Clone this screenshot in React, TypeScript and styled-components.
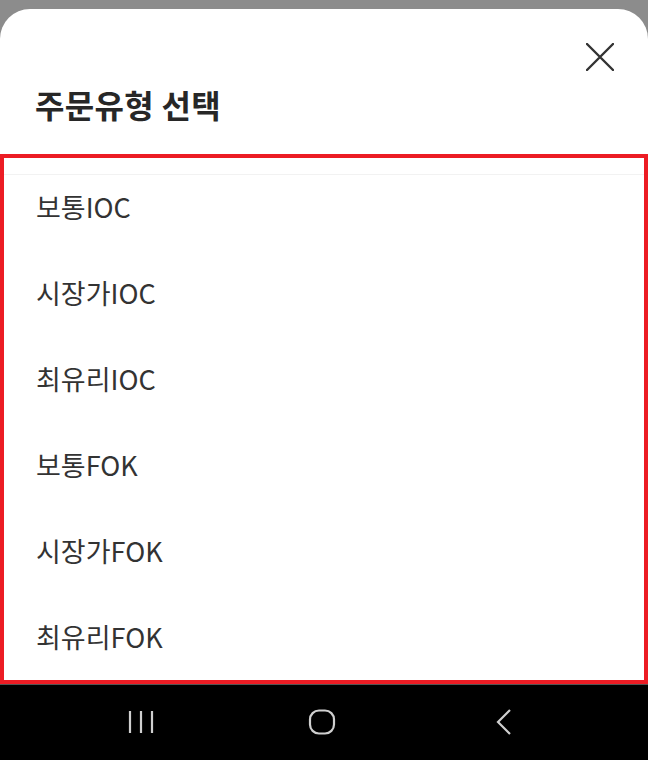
import React from "react";
import styled, { createGlobalStyle } from "styled-components";

const GlobalStyle = createGlobalStyle`
  html, body {
    margin: 0;
    padding: 0;
    background: #8c8c8c;
    font-family: "Noto Sans CJK KR", "Noto Sans", sans-serif;
  }
`;

const Screen = styled.div`
  width: 648px;
  height: 760px;
  display: flex;
  flex-direction: column;
  padding-top: 9px;
  box-sizing: border-box;
  background: #8c8c8c;
  overflow: hidden;
`;

const Sheet = styled.div`
  flex: 1;
  display: flex;
  flex-direction: column;
  background: #ffffff;
  border-radius: 30px 30px 0 0;
  overflow: hidden;
`;

const Header = styled.div`
  height: 145px;
  display: flex;
  flex-direction: column;
  padding: 27px 34px 0 35px;
  box-sizing: border-box;
`;

const CloseRow = styled.div`
  display: flex;
  justify-content: flex-end;
  height: 41px;
  align-items: center;
`;

const CloseButton = styled.button`
  width: 28px;
  height: 28px;
  padding: 0;
  border: none;
  background: transparent;
  display: flex;
  align-items: center;
  justify-content: center;
  cursor: pointer;
`;

const Title = styled.h2`
  margin: 6px 0 0;
  font-size: 32px;
  line-height: 42px;
  font-weight: 700;
  color: #272727;
  letter-spacing: 0.3px;
`;

const Highlight = styled.div`
  flex: 1;
  border: 4px solid #ec1c24;
  display: flex;
  flex-direction: column;
  overflow: hidden;
`;

const List = styled.ul`
  list-style: none;
  margin: 16px 0 0;
  padding: 0;
  border-top: 1px solid #f2f2f2;
`;

const Item = styled.li`
  height: 86px;
  box-sizing: border-box;
  padding: 14px 0 0 32px;
  font-size: 27px;
  line-height: 36px;
  font-weight: 400;
  color: #333333;
  letter-spacing: 0;
`;

const NavBar = styled.div`
  height: 76px;
  flex-shrink: 0;
  background: #000000;
  border-top: 1px solid #555555;
  box-sizing: border-box;
  display: grid;
  grid-template-columns: 1fr 1fr 1fr;
  align-items: center;
  padding: 0 70px 2px 70px;
`;

const NavSlot = styled.div<{ $align: string; $offset?: number }>`
  display: flex;
  justify-content: ${(p) => p.$align};
  padding: 0 ${(p) => (p.$align === "flex-end" ? p.$offset ?? 0 : 0)}px 0
    ${(p) => (p.$align === "flex-start" ? p.$offset ?? 0 : 0)}px;
`;

const orderTypes = ["보통IOC", "시장가IOC", "최유리IOC", "보통FOK", "시장가FOK", "최유리FOK"];

export default function App() {
  return (
    <>
      <GlobalStyle />
      <Screen>
        <Sheet>
          <Header>
            <CloseRow>
              <CloseButton aria-label="닫기">
                <svg width="28" height="28" viewBox="0 0 28 28">
                  <path d="M1 1 L27 27 M27 1 L1 27" stroke="#333" strokeWidth="2.4" strokeLinecap="round" />
                </svg>
              </CloseButton>
            </CloseRow>
            <Title>주문유형 선택</Title>
          </Header>
          <Highlight>
            <List>
              {orderTypes.map((t) => (
                <Item key={t}>{t}</Item>
              ))}
            </List>
          </Highlight>
        </Sheet>
        <NavBar>
          <NavSlot $align="flex-start" $offset={58}>
            <svg width="26" height="24" viewBox="0 0 26 24">
              <path d="M2 1 V23 M13 1 V23 M24 1 V23" stroke="#cfcfcf" strokeWidth="2.2" />
            </svg>
          </NavSlot>
          <NavSlot $align="center">
            <svg width="28" height="26" viewBox="0 0 28 26" style={{ marginRight: 4 }}>
              <rect x="2" y="1.5" width="24" height="23" rx="9" fill="none" stroke="#cfcfcf" strokeWidth="2.2" />
            </svg>
          </NavSlot>
          <NavSlot $align="flex-end" $offset={66}>
            <svg width="16" height="26" viewBox="0 0 16 26">
              <path d="M14 1 L2 13 L14 25" fill="none" stroke="#cfcfcf" strokeWidth="2.2" />
            </svg>
          </NavSlot>
        </NavBar>
      </Screen>
    </>
  );
}
